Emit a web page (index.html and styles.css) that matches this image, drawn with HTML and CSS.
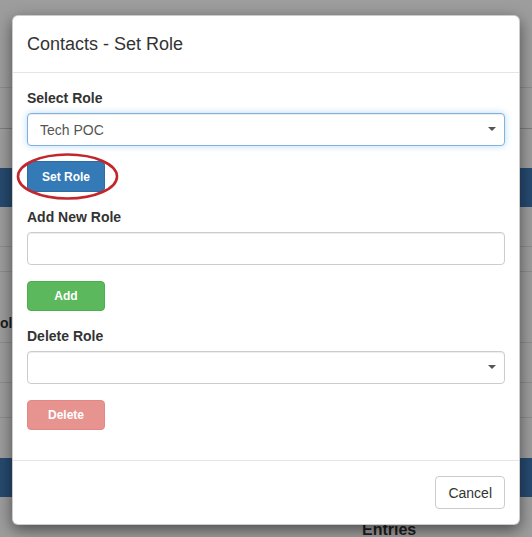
FILE: index.html
```html
<!DOCTYPE html>
<html>
<head>
<meta charset="utf-8">
<link rel="stylesheet" href="styles.css">
</head>
<body>
<div class="page">
  <div class="row r1"></div>
  <div class="row r2"></div>
  <div class="row r3"></div>
  <div class="band"></div>
  <div class="row r5"></div>
  <div class="row r6"></div>
  <div class="row r7"><span class="cell-text">ol</span></div>
  <div class="row r8"></div>
  <div class="row r9"></div>
  <div class="row r10"></div>
  <div class="band"></div>
  <div class="row r12"><span class="entries">Entries</span></div>
</div>

<div class="modal">
  <div class="modal-header">
    <h4 class="modal-title">Contacts - Set Role</h4>
  </div>
  <div class="modal-body">
    <label class="lbl">Select Role</label>
    <div class="select-wrap">
      <select class="control focus"><option>Tech POC</option></select>
      <span class="caret"></span>
    </div>
    <div class="btn-wrap">
      <button class="btn btn-sm btn-primary">Set Role</button>
      <svg class="circle" width="103" height="49" viewBox="0 0 103 49"><ellipse cx="51.5" cy="24.5" rx="49.5" ry="22" fill="none" stroke="#c1272d" stroke-width="2.6"/></svg>
    </div>

    <label class="lbl">Add New Role</label>
    <input class="control" type="text">
    <div class="btn-wrap">
      <button class="btn btn-sm btn-success">Add</button>
    </div>

    <label class="lbl">Delete Role</label>
    <div class="select-wrap">
      <select class="control"><option></option></select>
      <span class="caret"></span>
    </div>
    <div class="btn-wrap">
      <button class="btn btn-sm btn-danger" disabled>Delete</button>
    </div>
  </div>
  <div class="modal-footer">
    <button class="btn btn-default">Cancel</button>
  </div>
</div>
</body>
</html>
```
FILE: styles.css
```css
* { box-sizing: border-box; }
html, body { margin: 0; padding: 0; }
body {
  width: 532px;
  height: 537px;
  overflow: hidden;
  background: #9d9d9d;
  font-family: "Liberation Sans", Arial, sans-serif;
  font-size: 14px;
  color: #333;
  position: relative;
}

/* dimmed background page */
.page { display: flex; flex-direction: column; }
.row { border-bottom: 1px solid #8c8c8c; position: relative; }
.r1 { height: 88px; }
.r2 { height: 41px; border-bottom-color: #7d7d7d; }
.r3 { height: 39px; border-bottom: 0; }
.band { height: 39px; background: #264a6f; }
.r5 { height: 40px; }
.r6 { height: 25px; }
.r7 { height: 71px; }
.r8 { height: 40px; }
.r9 { height: 35px; }
.r10 { height: 40px; border-bottom: 0; }
.r12 { height: 40px; border-bottom: 0; }
.cell-text {
  position: absolute;
  left: 0;
  top: 43px;
  font-weight: bold;
  font-size: 14px;
  color: #1c1c1c;
}
.entries {
  position: absolute;
  left: 362px;
  top: 24px;
  font-weight: bold;
  font-size: 16px;
  color: #1e1e1e;
}

/* modal */
.modal {
  position: absolute;
  left: 12px;
  top: 15px;
  width: 508px;
  background: #fff;
  border: 1px solid rgba(0,0,0,.2);
  border-radius: 6px;
  box-shadow: 0 5px 15px rgba(0,0,0,.5);
}
.modal-header {
  padding: 15px 14px;
  border-bottom: 1px solid #e5e5e5;
}
.modal-title {
  margin: 0;
  font-size: 18px;
  font-weight: normal;
  line-height: 26px;
  color: #333;
}
.modal-body {
  padding: 15px 14px 15px;
  display: flex;
  flex-direction: column;
}
.lbl {
  display: block;
  font-weight: bold;
  font-size: 14px;
  line-height: 20px;
  margin-bottom: 5px;
  color: #333;
}
.select-wrap { position: relative; }
.control {
  display: block;
  width: 100%;
  height: 33px;
  padding: 6px 12px;
  font-family: inherit;
  font-size: 14px;
  color: #555;
  background: #fff;
  border: 1px solid #ccc;
  border-radius: 4px;
  box-shadow: inset 0 1px 1px rgba(0,0,0,.075);
  -webkit-appearance: none;
  appearance: none;
  outline: none;
  margin: 0;
}
.control.focus {
  border-color: #7fb3de;
  box-shadow: inset 0 1px 1px rgba(0,0,0,.075), 0 0 7px rgba(102,175,233,.45);
}
.caret {
  position: absolute;
  right: 9px;
  top: 14px;
  width: 0;
  height: 0;
  border-left: 4px solid transparent;
  border-right: 4px solid transparent;
  border-top: 4px solid #555;
}
.btn-wrap {
  position: relative;
  display: flex;
  margin-top: 15px;
  margin-bottom: 15px;
}
.btn {
  font-family: inherit;
  border: 1px solid transparent;
  border-radius: 4px;
  cursor: pointer;
  margin: 0;
}
.btn-sm {
  width: 78px;
  height: 30px;
  font-size: 12px;
  font-weight: bold;
  color: #fff;
  padding: 0;
}
.btn-primary { background: #337ab7; border-color: #2e6da4; height: 31px; }
.btn-success { background: #5cb85c; border-color: #4cae4c; margin-top: 1px; }
.btn-danger { background: #d9534f; border-color: #d43f3a; opacity: .62; margin-top: 1px; }
.circle {
  position: absolute;
  left: -11px;
  top: -9px;
}
.modal-footer {
  padding: 15px 14px;
  border-top: 1px solid #e5e5e5;
  display: flex;
  justify-content: flex-end;
}
.btn-default {
  height: 33px;
  padding: 0 12px;
  font-size: 14px;
  color: #333;
  background: #fff;
  border-color: #ccc;
}
```
